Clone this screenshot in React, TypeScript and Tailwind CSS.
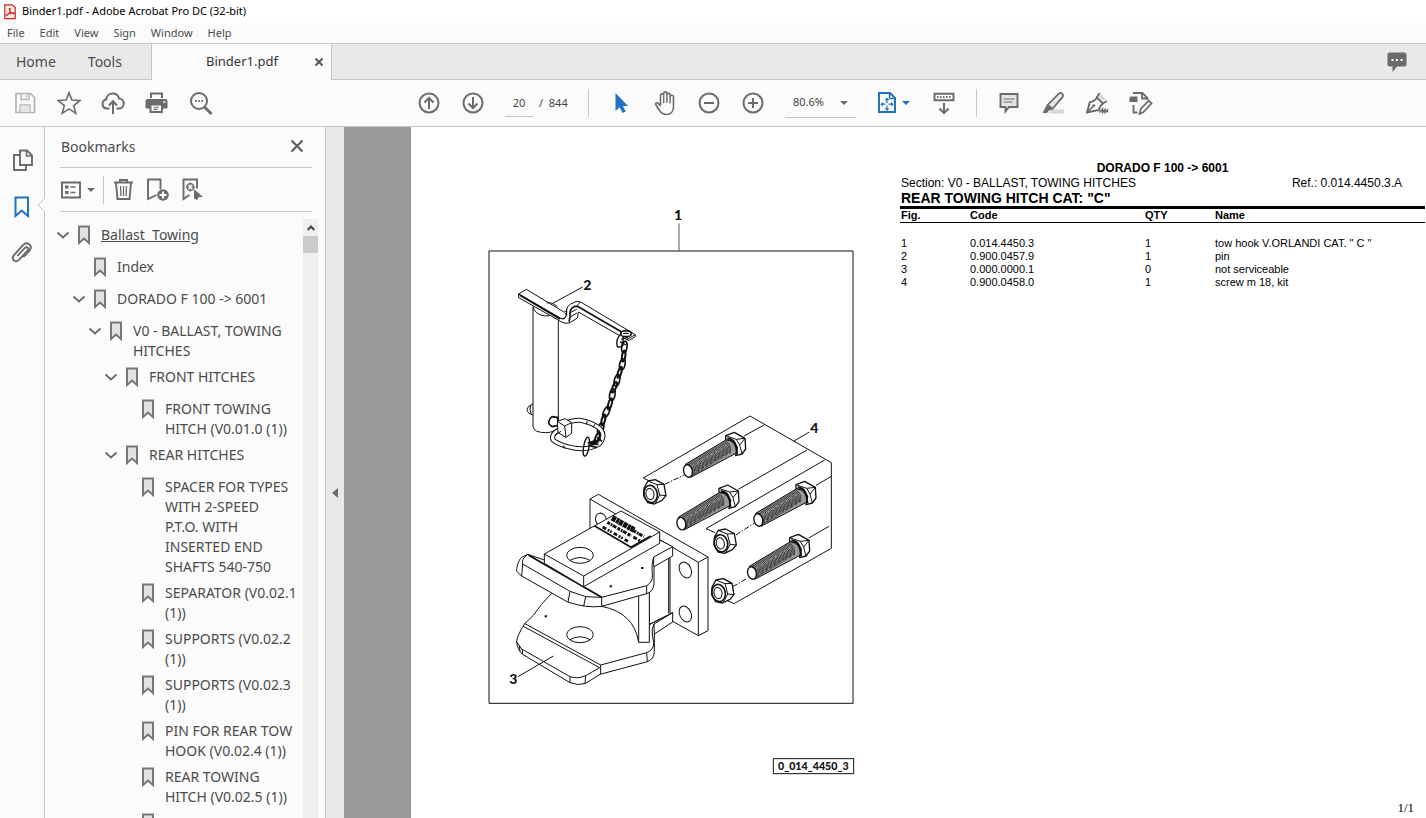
import type { ReactNode } from 'react'
import clsx from 'clsx'

const MENUS = ['File', 'Edit', 'View', 'Sign', 'Window', 'Help']

const BOOKMARKS = [
  { level: 0, open: true, current: true, title: 'Ballast  Towing' },
  { level: 1, title: 'Index' },
  { level: 1, open: true, title: 'DORADO F 100 -> 6001' },
  { level: 2, open: true, title: 'V0 - BALLAST, TOWING\nHITCHES' },
  { level: 3, open: true, title: 'FRONT HITCHES' },
  { level: 4, title: 'FRONT TOWING\nHITCH (V0.01.0 (1))' },
  { level: 3, open: true, title: 'REAR HITCHES' },
  { level: 4, title: 'SPACER FOR TYPES\nWITH 2-SPEED\nP.T.O. WITH\nINSERTED END\nSHAFTS 540-750' },
  { level: 4, title: 'SEPARATOR (V0.02.1\n(1))' },
  { level: 4, title: 'SUPPORTS (V0.02.2\n(1))' },
  { level: 4, title: 'SUPPORTS (V0.02.3\n(1))' },
  { level: 4, title: 'PIN FOR REAR TOW\nHOOK (V0.02.4 (1))' },
  { level: 4, title: 'REAR TOWING\nHITCH (V0.02.5 (1))' },
  { level: 4, title: 'REAR SWINGING' },
]

const INDENT = ['pl-0', 'pl-4', 'pl-8', 'pl-12', 'pl-16']

const PARTS = [
  ['1', '0.014.4450.3', '1', 'tow hook V.ORLANDI CAT. " C "'],
  ['2', '0.900.0457.9', '1', 'pin'],
  ['3', '0.000.0000.1', '0', 'not serviceable'],
  ['4', '0.900.0458.0', '1', 'screw m 18, kit'],
]

function Icon({ children, className }: { children: ReactNode; className?: string }) {
  return (
    <svg className={clsx('size-6 shrink-0', className)} viewBox="0 0 24 24" fill="none" stroke="currentColor" strokeWidth={2}>
      {children}
    </svg>
  )
}

function Tool({ label, children, className }: { label: string; children: ReactNode; className?: string }) {
  return (
    <button type="button" aria-label={label} className={clsx('flex shrink-0 items-center', className)}>
      {children}
    </button>
  )
}

function Caret({ className }: { className?: string }) {
  return (
    <svg className={clsx('h-1 w-2', className)} viewBox="0 0 8 4" fill="currentColor">
      <path d="M0 0h8L4 4z" />
    </svg>
  )
}

function Separator() {
  return <div className="h-7 w-px shrink-0 bg-[#c8c8c8]" />
}

function TitleBar() {
  return (
    <header className="flex h-[23px] items-center gap-1.5 bg-white pl-1 text-[11px] text-black">
      <svg className="h-4 w-3" viewBox="0 0 12 16" fill="none" stroke="#d0211c">
        <path d="M.8.8h7.700l2.700 2.700v11.200H.8z" fill="#fdeceb" strokeWidth="1.200" />
        <path d="M2.6 11.4c2-.8 3.6-3.8 3.5-6.4c0-1-1-.8-.8.2c.4 2.400 2.200 4.400 4.300 4.600c.9 0 .8-.9-.1-1c-2.300-.1-4.500.7-6.400 1.700c-.8.500-1.100.8-.5.900z" strokeWidth="1.100" />
      </svg>
      <h1>Binder1.pdf - Adobe Acrobat Pro DC (32-bit)</h1>
    </header>
  )
}

function TabBar() {
  return (
    <div className="flex h-[37px] items-stretch border-y border-[#c6c6c6] bg-[#e9e9e9] text-[14px] text-[#4b4b4b]">
      <div className="flex w-38 items-center gap-8 border-r border-[#c6c6c6] pl-4">
        <button type="button">Home</button>
        <button type="button">Tools</button>
      </div>
      <div className="-mb-px flex w-[180px] items-center border-r border-[#c6c6c6] bg-[#fbfbfb]">
        <span className="flex-1 pl-[54px] text-[13px] text-[#333]">Binder1.pdf</span>
        <button type="button" aria-label="Close tab" className="mr-2">
          <svg className="size-2" viewBox="0 0 8 8" stroke="#555" strokeWidth="2">
            <path d="M.5.5l7 7m0-7l-7 7" />
          </svg>
        </button>
      </div>
      <button type="button" aria-label="Comments" className="mr-[18px] ml-auto">
        <svg className="h-[22px] w-[22px]" viewBox="0 0 22 22" fill="#6b6b6b">
          <path d="M3.500 1.500h15a2 2 0 0 1 2 2v10a2 2 0 0 1-2 2h-7.500L6.500 21v-5.500h-3a2 2 0 0 1-2-2v-10a2 2 0 0 1 2-2z" />
          <path d="M5.500 8h2v2h-2zM10 8h2v2h-2zM14.500 8h2v2h-2z" fill="#fff" />
        </svg>
      </button>
    </div>
  )
}

function Toolbar() {
  return (
    <div className="flex h-[47px] items-center gap-5 border-b border-[#c6c6c6] pl-[13px] text-[#6b6b6b]">
      <Tool label="Save" className="text-[#b3b3b3]">
        <Icon>
          <path d="M3 2.500h14.500l4 4v15h-18.500z" strokeWidth="1.700" />
          <path d="M8 3v5.500h8v-6M13.500 4v2.500M7 21v-7h10v7" strokeWidth="1.500" />
          <path d="M7.500 14.500h9v6h-9z" fill="#e4e4e4" stroke="none" />
        </Icon>
      </Tool>
      <Tool label="Star">
        <Icon>
          <path d="M12 1.700l2.900 7.400 8 .4-6.200 5.100 2.100 7.700-6.800-4.400-6.800 4.400 2.100-7.700L1.100 9.500l8-.4z" strokeWidth="1.600" />
        </Icon>
      </Tool>
      <Tool label="Upload">
        <Icon>
          <path d="M8.500 17.500H6a4.500 4.500 0 0 1-.8-8.900C5.500 5 8.200 2.600 11.800 2.600c3.200 0 5.500 2 6.200 4.900a5 5 0 0 1-.5 10h-2" />
          <path d="M12 23V11M8 14.500l4-4.200 4 4.200" />
        </Icon>
      </Tool>
      <Tool label="Print">
        <Icon>
          <path d="M6 7V2.500h11V7" strokeWidth="2" />
          <path d="M2.500 8h18a2 2 0 0 1 2 2v6.500a1 1 0 0 1-1 1h-3.500V22H4.500v-4.500h-3a1 1 0 0 1-1-1V10a2 2 0 0 1 2-2z" fill="currentColor" stroke="none" />
          <path d="M6.500 14.500h9.500v5.500H6.500z" fill="#fff" stroke="none" />
          <path d="M8.500 16.200h5.500M8.500 18.400h4" strokeWidth="1.100" />
          <path d="M18 11h2.500" stroke="#fff" strokeWidth="1.400" />
        </Icon>
      </Tool>
      <Tool label="Find">
        <Icon>
          <circle cx="10" cy="10" r="8" />
          <path d="M15.500 16l7 7" strokeWidth="2.800" />
          <path d="M6 10h1.700M9.200 10h1.700M12.400 10h1.700" />
        </Icon>
      </Tool>

      <Tool label="Previous page" className="ml-[184px]">
        <Icon>
          <circle cx="12" cy="12" r="9.500" />
          <path d="M12 18V7.500M7.500 11.500l4.500-4.500 4.500 4.500" />
        </Icon>
      </Tool>
      <Tool label="Next page">
        <Icon>
          <circle cx="12" cy="12" r="9.500" />
          <path d="M12 6v10.500M7.500 12.500l4.500 4.500 4.500-4.500" />
        </Icon>
      </Tool>
      <div className="flex w-[63px] shrink-0 items-center gap-1.5 text-[11px] text-[#444]">
        <input
          aria-label="Page number"
          defaultValue="20"
          className="h-7 w-7 border-b border-[#c6c6c6] bg-transparent text-center"
        />
        <span className="whitespace-pre">/  844</span>
      </div>
      <Separator />
      <Tool label="Select">
        <Icon>
          <path d="M6.500 2v18l4.200-3.800L13.500 22l3.200-1.600-2.800-5.400H19z" fill="#1f72c4" stroke="none" />
        </Icon>
      </Tool>
      <Tool label="Hand">
        <Icon>
          <path
            d="M7.500 14V4.500a1.600 1.600 0 0 1 3.200 0V2.500a1.600 1.600 0 0 1 3.200 0V4a1.600 1.600 0 0 1 3.200 0V6a1.600 1.600 0 0 1 3.400 0v10c0 4.800-3 7.500-7.300 7.500-4 0-5.700-2-7.400-5L3 14c-.9-1.800.9-3 2.300-1.600l2.200 2.600"
            strokeWidth="1.600"
          />
          <path d="M10.700 4.500V12M13.900 4V12M17.100 6V12.500" strokeWidth="1.400" />
        </Icon>
      </Tool>
      <Tool label="Zoom out">
        <Icon>
          <circle cx="12" cy="12" r="9.500" />
          <path d="M7 12h10" />
        </Icon>
      </Tool>
      <Tool label="Zoom in">
        <Icon>
          <circle cx="12" cy="12" r="9.500" />
          <path d="M7 12h10M12 7v10" />
        </Icon>
      </Tool>
      <div className="relative w-[71px] shrink-0 border-b border-[#c6c6c6] text-[11px] text-[#444]">
        <select aria-label="Zoom level" className="h-7 w-full appearance-none bg-transparent pl-2">
          <option>80.6%</option>
        </select>
        <Caret className="pointer-events-none absolute top-3 right-2 text-[#6b6b6b]" />
      </div>
      <Tool label="Fit page" className="w-9 text-[#1f72c4]">
        <Icon>
          <path d="M3 2H14l5 5v14H3z" strokeWidth="2" />
          <path d="M13.500 2v5.500H19" strokeWidth="1.500" />
          <path d="M11 8v4M11 14.500v4M6 13.200h3.500M12.500 13.200h3.500" strokeWidth="1.200" />
          <path d="M11 6.500l2.300 2.700H8.700zM11 19.900l2.300-2.700H8.700zM4.300 13.200l2.700-2.300v4.600zM17.700 13.200l-2.700-2.300v4.600z" fill="currentColor" stroke="none" />
        </Icon>
        <Caret className="ml-0.5" />
      </Tool>
      <Tool label="Page display">
        <Icon>
          <path d="M2.500 2.700h19v6.600h-19z" />
          <path d="M5 6h1.500M8 6h1.500M11 6h1.500M14 6h1.500M17 6h1.500" />
          <path d="M12 12v9.500M7.500 17.500L12 22l4.500-4.500" />
        </Icon>
      </Tool>
      <Separator />
      <Tool label="Add comment">
        <Icon>
          <path d="M3.500 3h17v13H12l-3.500 4.500v-4.500h-5z" fill="#e4e4e4" strokeWidth="1.900" />
          <path d="M6.500 8h11M6.500 11h9" strokeWidth="1.100" />
        </Icon>
      </Tool>
      <Tool label="Highlight">
        <Icon>
          <path d="M11 18.500h12v4H7z" fill="#d8d8d8" stroke="none" />
          <path d="M6.500 14L17.500 2.800c1.300-1.300 2.600-1.200 3.700-.2 1.100 1.100 1.100 2.400.1 3.800L11.500 17.800z" fill="#e4e4e4" strokeWidth="1.700" />
          <path d="M6 13.500l5.500 4.800-4 1.700-1.500 2H1.500z" fill="currentColor" stroke="none" />
        </Icon>
      </Tool>
      <Tool label="Sign">
        <Icon>
          <path d="M13 4.500L15.500 2.500l5 5.500-2.500 2z" fill="#d8d8d8" stroke="none" />
          <path d="M2 21.500L4.800 11.200Q9.500 10.500 12 6.500l6 6q-3.500 2.500-4 6.500z" strokeWidth="1.900" />
          <path d="M2 21.500l6.500-6.500M11.500 7l3-5M17.500 12.500l4.500-2.500" strokeWidth="1.700" />
          <circle cx="9" cy="14.500" r="1.300" fill="currentColor" stroke="none" />
          <path d="M14.500 21.500l3-3.500v3.500l2.500-3v3l2.500-2.500v2.500" strokeWidth="1.400" />
        </Icon>
      </Tool>
      <Tool label="Organize">
        <Icon>
          <path d="M.5 7.500c0-1.500.3-2 1.500-2h6.500V11H.5z" fill="currentColor" stroke="none" />
          <path d="M4 2h9.500l5 5v2M13 2v5.500H18.500M4.500 14v7.500h4" strokeWidth="1.800" />
          <path d="M10.500 23l1.200-5 8-8.300 2.800 2.600-8 8.700z" fill="#fbfbfb" strokeWidth="1.700" />
        </Icon>
      </Tool>
    </div>
  )
}

function SideRail() {
  return (
    <nav className="relative flex w-11 shrink-0 flex-col items-center gap-[23px] pt-5 pl-0.5 text-[#6b6b6b]">
      <Tool label="Page thumbnails">
        <Icon>
          <path d="M9 3.500h7l5 5V18H9z" strokeWidth="1.900" />
          <path d="M15.500 4v5H21" strokeWidth="1.500" />
          <path d="M8.500 8H3v15h12v-5" strokeWidth="1.900" />
        </Icon>
      </Tool>
      <Tool label="Bookmarks" className="text-[#1f72c4]">
        <Icon>
          <path d="M4.500 3.500h12.500v18.500L10.700 16.500 4.500 22z" />
        </Icon>
      </Tool>
      <Tool label="Attachments">
        <Icon>
          <path
            d="M6.500 14.800l7.200-7.700c2.200-2.200 4.800.3 2.800 2.500l-8.300 9c-4 4-8.700-.5-5-4.700L12 4.100c4.500-4.300 10.500.7 6.300 5.700l-6 6.400"
            strokeWidth="1.900"
          />
        </Icon>
      </Tool>
      {/* notch pointing at the open pane */}
      <svg className="absolute top-[70px] -right-px h-4 w-2" viewBox="0 0 8 16" fill="#fbfbfb" stroke="#c6c6c6">
        <path d="M8 1L1 8l7 7" />
      </svg>
    </nav>
  )
}

function BookmarksPane() {
  return (
    <aside className="flex w-[282px] shrink-0 flex-col border-x border-[#c6c6c6] pl-[15px] text-[#4b4b4b]">
      <div className="mr-[13px] flex h-[41px] items-center justify-between border-b border-[#c6c6c6] pr-2 pb-0.5 pl-px">
        <h2 className="text-[14px]">Bookmarks</h2>
        <button type="button" aria-label="Close pane">
          <svg className="size-3.5" viewBox="0 0 14 14" stroke="#5a5a5a" strokeWidth="2">
            <path d="M1.500 1.500l11 11m0-11l-11 11" />
          </svg>
        </button>
      </div>
      <div className="mr-[13px] flex h-11 items-center border-b border-[#c6c6c6] text-[#6b6b6b]">
        <Tool label="Options" className="gap-1">
          <Icon className="-ml-px">
            <path d="M3 4.500h18v15H3z" strokeWidth="1.900" />
            <path d="M6 9h3.500M6 14.500h3.500" strokeWidth="3" />
            <path d="M11.500 9h5M11.500 14.500h5" strokeWidth="1.700" />
          </Icon>
          <Caret />
        </Tool>
        <div className="mx-2 h-7 w-px bg-[#c6c6c6]" />
        <Tool label="Delete">
          <Icon>
            <path d="M2 4.500h19M8 4V2h7v2M4 5l1.500 16h12L19 5" strokeWidth="1.900" />
            <path d="M8.500 8l.4 10M11.500 8v10M14.500 8l-.4 10" strokeWidth="1.300" />
          </Icon>
        </Tool>
        <Tool label="New bookmark" className="ml-2.5">
          <Icon>
            <path d="M10.500 17l-8.500 4v-19.500h12.500v10" strokeWidth="1.900" />
            <circle cx="17" cy="17" r="5.800" fill="currentColor" stroke="none" />
            <path d="M13.500 17h7M17 13.500v7" stroke="#fff" />
          </Icon>
        </Tool>
        <Tool label="Find current bookmark" className="ml-2.5">
          <Icon>
            <path d="M9.500 17l-6 4V1.500h13.500v9" strokeWidth="1.900" />
            <circle cx="10.300" cy="9" r="3.300" strokeWidth="1.300" />
            <path d="M10.300 4.500v3M10.300 10.500v3M5.800 9H9M11.600 9h3.200" strokeWidth="1.300" />
            <path d="M14 11l9 8h-4l-2 3-3-1.500z" fill="currentColor" stroke="none" />
          </Icon>
        </Tool>
      </div>
      <div className="flex min-h-0 flex-1 pt-[7px]">
        <ul className="-ml-1 min-w-0 flex-1 space-y-1.5 overflow-hidden pt-1.5 text-[14px] leading-5">
          {BOOKMARKS.map((item) => (
            <li key={item.title} className={clsx('flex min-h-[26px]', INDENT[item.level])}>
              <div className="flex h-5 w-5 shrink-0 items-center">
                {item.open && (
                  <svg className="h-2 w-3.5" viewBox="0 0 14 8" fill="none" stroke="#666" strokeWidth="1.700">
                    <path d="M1.500 1.500L7 6.500l5.500-5" />
                  </svg>
                )}
              </div>
              <svg className="h-5 w-4 shrink-0" viewBox="0 0 16 20" fill="#e2e2e2" stroke="#777" strokeWidth="2">
                <path d="M3 1.500h10v16.500L8 13.500 3 18z" />
              </svg>
              <a href="#" className={clsx('ml-[9px] whitespace-pre', item.current && 'underline')}>
                {item.title}
              </a>
            </li>
          ))}
        </ul>
        <div className="mr-[7px] flex w-[15px] shrink-0 flex-col items-center bg-[#efefef]">
          <svg className="mt-[5px] mb-1 h-2 w-2 shrink-0" viewBox="0 0 8 8" fill="none" stroke="#444" strokeWidth="2">
            <path d="M.7 6L4 2.500 7.300 6" />
          </svg>
          <div className="h-[17px] w-full bg-[#cbcbcb]" />
        </div>
      </div>
    </aside>
  )
}

// thread marks run along the shank between the tip and the head
const THREADS = Array.from({ length: 30 }, (_, i) => i)

function Bolt({ x, y }: { x: number; y: number }) {
  return (
    <g transform={`translate(${x} ${y})`}>
      <path d="M-8 -20L115 -94Q146 -90 146 -54L8 19z" fill="#999" />
      {THREADS.map((i) => (
        <path key={i} d={`M${-4 + i * 4} ${-20 - i * 2.4}q19 8 15 36`} strokeWidth="2" />
      ))}
      <path d="M20 4L134 -58M14 -16L118 -78" stroke="#fff" strokeWidth="1.500" strokeDasharray="5 11" />
      <ellipse cx="0" cy="0" rx="13" ry="19" transform="rotate(-14)" fill="#fff" strokeWidth="4" />
      <path d="M113 -106L139 -116 171 -98 173 -66 162 -51 143 -46 148 -70 136 -92 113 -94z" fill="#fff" strokeWidth="4" />
      <path d="M118 -98Q146 -96 147 -50" strokeWidth="6" />
      <path d="M113 -106L145 -95 171 -98M145 -95L155 -78 162 -51M155 -78L171 -98" />
    </g>
  )
}

function Nut({ x, y }: { x: number; y: number }) {
  return (
    <g transform={`translate(${x} ${y})`}>
      <path d="M-31 -13L-19 -34 3 -38 29 -24 35 10 23 24 0 35 -20 31 -32 10z" fill="#fff" strokeWidth="4" />
      <path d="M-19 -34L8 -23 29 -24M8 -23L16 8 3 33M16 8L35 10" />
      <ellipse cx="-11" cy="5" rx="20" ry="26" transform="rotate(-12 -11 5)" fill="#fff" strokeWidth="5" />
      <ellipse cx="-13" cy="5" rx="12" ry="17" transform="rotate(-12 -13 5)" fill="#fff" />
    </g>
  )
}

const CHAIN = [
  [433, 441, 8], [431, 468, 8], [427, 493, 12], [419, 517, 18], [411, 541, 14], [403, 562, 22],
  [397, 584, 10], [390, 612, 16], [379, 636, 26], [370, 660, 14], [362, 686, 18], [352, 712, 24],
]

function HitchDrawing() {
  return (
    <svg
      className="h-[580px] w-[380px]"
      viewBox="0 0 1140 1740"
      fill="none"
      stroke="#111"
      strokeWidth="3"
      strokeLinejoin="round"
      role="img"
      aria-label="Rear towing hitch exploded view"
    >
      <path d="M27 153H1119V1510H27z" strokeWidth="3" />
      <path d="M597 70V153" stroke="#555" />

      {/* 2: pin with chain */}
      <path d="M159 612Q142 618 141 628Q142 641 159 645M152 615Q147 630 154 643" />
      <path d="M159 320V680Q162 698 197 698Q220 698 235 684V362" fill="#fff" />
      <path d="M159 320Q166 346 197 348Q208 348 214 344" />
      <path d="M218 310L308 261" />
      <path
        d="M116 282L139 268 250 335Q259 338 260 328Q262 318 272 312L290 304 302 306 466 404V410L448 421 440 419 295 336 292 354 270 368Q257 373 245 366L116 293z"
        fill="#fff"
      />
      <path d="M116 282L240 354Q256 361 259 345L260 328" strokeWidth="4" />
      <path d="M120 286L240 357" strokeWidth="5" />
      <path d="M267 365Q272 352 270 338Q272 324 284 319L295 320 425 396" strokeWidth="5" />
      <path d="M272 350L291 339M254 340L262 344M466 404L440 419M302 306L290 318M200 309Q215 305 232 320M270 338L290 328" />
      <path d="M424 400Q405 420 412 440Q420 444 429 436V408" fill="#fff" strokeWidth="4" />
      <ellipse cx="438" cy="401" rx="16" ry="9" strokeWidth="5" />
      <path d="M430 400h16M420 425l18 10M424 418l20-6" strokeWidth="4" />
      {CHAIN.map(([x, y, angle], i) => (
        <ellipse key={y} cx={x} cy={y} rx={i % 2 ? 5 : 8} ry="17" transform={`rotate(${angle} ${x} ${y})`} strokeWidth={i % 2 ? 6 : 5} />
      ))}
      <path d="M350 722l-20 6M345 730l-14 2" strokeWidth="7" />
      <path
        d="M245 675Q275 660 300 661Q340 668 362 688Q378 708 358 732Q330 750 285 745Q235 735 219 720Q212 700 242 688"
        strokeWidth="15"
      />
      <path
        d="M245 675Q275 660 300 661Q340 668 362 688Q378 708 358 732Q330 750 285 745Q235 735 219 720Q212 700 242 688"
        stroke="#fff"
        strokeWidth="9"
      />
      <path d="M232 652L216 650Q204 660 207 672L216 680 236 676z" fill="#fff" strokeWidth="5" />
      <path d="M232 664L255 656 275 668V700L258 712 234 698z" fill="#fff" />
      <path d="M232 664L254 678 275 668M254 678L258 712M322 663L318 674M345 672L339 682M250 736L254 746M225 705L243 694" />
      <ellipse cx="319" cy="740" rx="8" ry="29" transform="rotate(10 319 740)" strokeWidth="4" />
      <path d="M323 728L355 734M325 736L350 742M352 712L366 724" strokeWidth="5" />

      {/* 4: screws and nuts */}
      <g transform="translate(450 600)">
        <path d="M62 245L40 234 360 48 604 188V445L312 611 288 600" />
        <path d="M342 108L402 75M492 123L538 96M325 268L531 150M255 398L228 386 584 180M558 256L604 229M536 414L597 379" />
        <path d="M104 253L162 225M318 405L372 370M308 560L352 535" strokeDasharray="16 5 4 5" />
        <Bolt x={174} y={213} />
        <Bolt x={154} y={371} />
        <Bolt x={385} y={360} />
        <Bolt x={366} y={519} />
        <Nut x={73} y={277} />
        <Nut x={284} y={425} />
        <Nut x={277} y={574} />
      </g>

      {/* 3: hitch body */}
      <g transform="translate(30 840)">
        <path d="M300 134V57L325 43 654 231V452L625 467 548 424 300 270z" fill="#fff" />
        <path d="M300 57L625 247V467M625 247L654 231" />
        <ellipse cx="333" cy="119" rx="16" ry="20" transform="rotate(-20 333 119)" />
        <ellipse cx="586" cy="270" rx="17" ry="25" transform="rotate(-25 586 270)" />
        <ellipse cx="586" cy="402" rx="17" ry="25" transform="rotate(-25 586 402)" />

        <path d="M185 340Q150 375 131 405L103 432Q80 470 80 486Q82 508 98 523L240 608Q262 618 287 610L330 583 472 545Q492 538 493 515V462L548 426V398L480 433 446 340z" fill="#fff" />
        <path d="M103 430L332 555 470 518Q492 510 491 488L487 465Q484 445 492 432L548 398" />
        <path d="M100 439L329 563 287 587Q262 598 240 590L95 507 80 486M240 590V608M287 587L285 610M332 555V582M470 518L472 545M97 507L98 523M88 497L90 514M492 432L493 462M478 432L548 398" />
        <path d="M335 379Q432 398 446 487" />

        <path d="M478 240L540 228V402L478 433z" fill="#fff" />
        <path d="M536 232V400" />
        <path d="M446 340V487H478V335" fill="#fff" />

        <path
          d="M80 266Q85 240 95 232L113 223 281 280 509 180 548 200V228L492 260V312Q490 335 470 341L335 379Q290 385 233 366L95 288 80 274z"
          fill="#fff"
        />
        <path d="M335 352L470 317Q490 305 487 283Q484 250 491 231L548 200M470 317V341M491 231V260" />
        <path d="M98 252L240 334 287 350 335 352V379M113 223L335 352M98 252L95 288M98 252Q94 236 113 223M240 334L234 366M287 350L281 379" />
        <path d="M116 226L335 352" strokeWidth="5" />

        <path d="M163 222L393 93 509 156V190L281 320 163 250z" fill="#fff" />
        <path d="M163 222L281 288 509 156M281 288V320" />
        <path d="M313 137L423 202 482 168" strokeWidth="5" />
        <path d="M366 113L434 151" strokeWidth="17" strokeDasharray="13 2 9 1 12 2" />
        <path d="M352 127L424 168M430 152L462 170" strokeWidth="9" strokeDasharray="9 3 5 2 12 4" />
        <path d="M338 141L414 184M430 171L456 186" strokeWidth="8" strokeDasharray="12 5 6 3 5 7" />

        <ellipse cx="270" cy="226" rx="40" ry="24" />
        <path d="M240 241Q270 224 300 241" />
        <ellipse cx="270" cy="464" rx="40" ry="24" />
        <path d="M240 479Q270 462 300 479" />
        <path d="M453 264h7M359 319h7M164 409h7" strokeWidth="6" />
        <path d="M84 590L190 528" />
      </g>

      <path d="M880 1676H1121V1721H880z" strokeWidth="3" />
      <g fill="#111" stroke="none" fontFamily="Lato, sans-serif" fontWeight="900" fontSize="42">
        <text x="582" y="61">1</text>
        <text x="310" y="270">2</text>
        <text x="88" y="1453">3</text>
        <text x="991" y="699">4</text>
        <text x="1000" y="1709" textAnchor="middle" fontSize="32">0_014_4450_3</text>
      </g>
    </svg>
  )
}

function PartsList() {
  return (
    <section className="ml-10 min-w-0 flex-1 pt-[34px] pr-px font-['Liberation_Sans',sans-serif] text-black">
      <h2 className="text-center text-[12px] leading-[15px] font-bold">DORADO F 100 -&gt; 6001</h2>
      <div className="flex justify-between pr-[23px] pl-px text-[12px] leading-[15px]">
        <p>Section: V0 - BALLAST, TOWING HITCHES</p>
        <p>Ref.: 0.014.4450.3.A</p>
      </div>
      <h3 className="pl-px text-[14px] leading-[15px] font-bold">REAR TOWING HITCH CAT: "C"</h3>
      <table className="w-full table-fixed text-left text-[11px] leading-[13px]">
        <thead className="border-t-3 border-b border-black">
          <tr>
            <th className="w-[70px] pl-px">Fig.</th>
            <th className="w-[175px]">Code</th>
            <th className="w-[70px]">QTY</th>
            <th>Name</th>
          </tr>
        </thead>
        <tbody className="before:block before:h-3.5">
          {PARTS.map(([fig, code, qty, name]) => (
            <tr key={fig}>
              <td className="pl-px">{fig}</td>
              <td>{code}</td>
              <td>{qty}</td>
              <td>{name}</td>
            </tr>
          ))}
        </tbody>
      </table>
    </section>
  )
}

export default function App() {
  return (
    <div className="flex h-screen flex-col overflow-hidden bg-[#fbfbfb] font-['Noto_Sans',sans-serif]">
      <TitleBar />
      <nav className="flex h-5 items-center gap-[15px] pl-[7px] text-[11px] text-[#4b4b4b]">
        {MENUS.map((menu) => (
          <button key={menu} type="button">
            {menu}
          </button>
        ))}
      </nav>
      <TabBar />
      <Toolbar />
      <div className="flex min-h-0 flex-1">
        <SideRail />
        <BookmarksPane />
        <button type="button" aria-label="Collapse pane" className="flex w-[18px] shrink-0 items-center justify-center bg-[#e9e9e9] pt-10">
          <svg className="h-2.5 w-1.5" viewBox="0 0 6 10" fill="#6b6b6b">
            <path d="M6 0v10L0 5z" />
          </svg>
        </button>
        <main className="flex min-w-0 flex-1 bg-[#999] pl-[67px]">
          <article className="relative flex min-w-0 flex-1 bg-white pl-[69px]">
            <div className="shrink-0 pt-[73px]">
              <HitchDrawing />
            </div>
            <PartsList />
            <p className="absolute right-3 bottom-0.5 font-['Liberation_Serif',serif] text-[13px] leading-4 text-black">1/1</p>
          </article>
        </main>
      </div>
    </div>
  )
}
